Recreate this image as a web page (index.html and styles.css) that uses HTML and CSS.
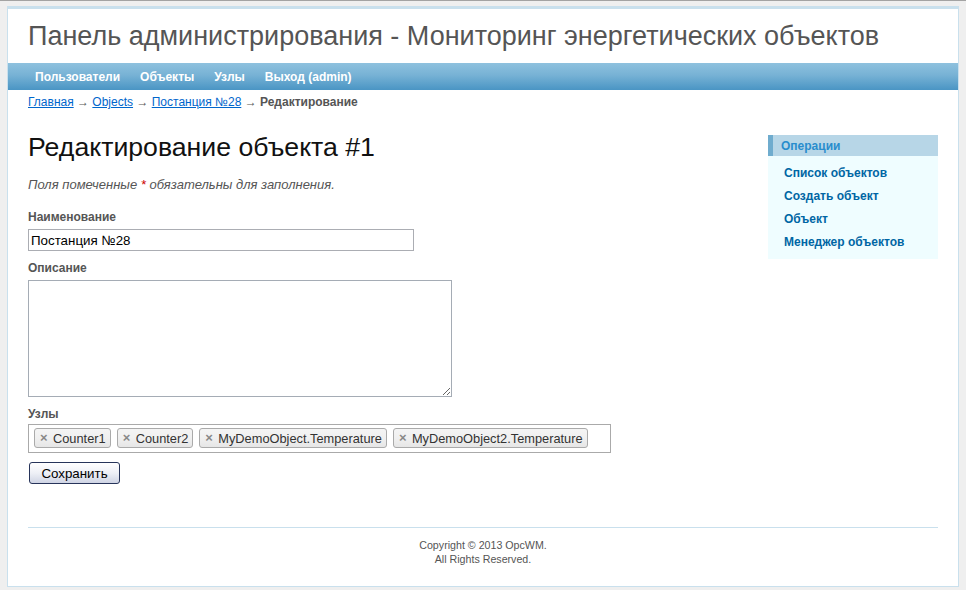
FILE: index.html
```html
<!DOCTYPE html>
<html lang="ru">
<head>
    <meta charset="UTF-8">
    <title>Панель администрирования - Редактирование объекта</title>
    <link rel="stylesheet" href="styles.css">
</head>
<body>
    <div class="page">
        <div class="header">
            <div class="logo">Панель администрирования - Мониторинг энергетических объектов</div>
        </div>
        <div class="mainmenu">
            <ul>
                <li><a href="#">Пользователи</a></li>
                <li><a href="#">Объекты</a></li>
                <li><a href="#">Узлы</a></li>
                <li><a href="#">Выход (admin)</a></li>
            </ul>
        </div>
        <div class="breadcrumbs">
            <a href="#">Главная</a> &rarr; <a href="#">Objects</a> &rarr; <a href="#">Постанция №28</a> &rarr; <span class="current">Редактирование</span>
        </div>

        <div class="columns">
            <div class="content">
                <h1>Редактирование объекта #1</h1>
                <form class="form">
                    <p class="note">Поля помеченные <span class="required">*</span> обязательны для заполнения.</p>

                    <div class="row">
                        <label for="name">Наименование</label>
                        <input type="text" id="name" class="text-input" value="Постанция №28">
                    </div>

                    <div class="row">
                        <label for="description">Описание</label>
                        <textarea id="description" class="text-area"></textarea>
                    </div>

                    <div class="row row-tags">
                        <label>Узлы</label>
                        <ul class="tag-box">
                            <li class="tag"><span class="tag-close">&times;</span>Counter1</li>
                            <li class="tag"><span class="tag-close">&times;</span>Counter2</li>
                            <li class="tag"><span class="tag-close">&times;</span>MyDemoObject.Temperature</li>
                            <li class="tag"><span class="tag-close">&times;</span>MyDemoObject2.Temperature</li>
                        </ul>
                    </div>

                    <div class="buttons">
                        <button type="button" class="save-btn">Сохранить</button>
                    </div>
                </form>
            </div>

            <div class="sidebar">
                <div class="portlet">
                    <div class="portlet-decoration">
                        <div class="portlet-title">Операции</div>
                    </div>
                    <div class="portlet-content">
                        <ul class="operations">
                            <li><a href="#">Список объектов</a></li>
                            <li><a href="#">Создать объект</a></li>
                            <li><a href="#">Объект</a></li>
                            <li><a href="#">Менеджер объектов</a></li>
                        </ul>
                    </div>
                </div>
            </div>
        </div>

        <div class="footer">
            Copyright &copy; 2013 OpcWM.<br>
            All Rights Reserved.
        </div>
    </div>
</body>
</html>
```

FILE: styles.css
```css
body {
    margin: 0;
    padding: 0;
    color: #555;
    font: normal 13.33px 'Liberation Sans', Arial, Helvetica, sans-serif;
    background: #efefef;
    border-top: 1px solid #a3a3a3;
}
.page {
    width: 950px;
    margin: 5px auto 0 auto;
    background: #fff;
    border: 1px solid #c9e0ed;
    border-top-width: 3px;
}
.logo {
    padding: 12px 20px 11px 20px;
    font-size: 27px;
    line-height: 31px;
    color: #555;
}
.mainmenu {
    background: linear-gradient(to bottom, #8ec1de 0%, #77b2d5 45%, #4a95c4 100%);
}
.mainmenu ul {
    display: flex;
    gap: 4px;
    list-style: none;
    margin: 0;
    padding: 6px 20px 5px 19px;
}
.mainmenu a {
    display: block;
    color: #fff;
    font-size: 12px;
    font-weight: bold;
    line-height: 16px;
    text-decoration: none;
    padding: 0 8px;
}
.breadcrumbs {
    font-size: 12px;
    line-height: 15px;
    padding: 5px 20px;
}
.breadcrumbs a {
    color: #06c;
}
.breadcrumbs .current {
    font-weight: bold;
}
.columns {
    display: flex;
}
.content {
    width: 740px;
    padding: 17px 0 20px 20px;
}
.sidebar {
    width: 170px;
    padding: 20px 20px 0 0;
}
h1 {
    margin: 0 0 14px 0;
    font-size: 26.67px;
    line-height: 31px;
    font-weight: normal;
    color: #111;
}
.form {
    margin: 0;
}
.note {
    margin: 0 0 18px 0;
    font-size: 13px;
    line-height: 15px;
    font-style: italic;
}
.required {
    color: #c00;
}
.row {
    margin-bottom: 10px;
}
.row label {
    display: block;
    font-size: 12px;
    font-weight: bold;
    line-height: 14px;
    margin-bottom: 5px;
}
.row-tags label {
    margin-bottom: 3px;
}
.text-input {
    display: block;
    box-sizing: border-box;
    width: 386px;
    height: 22px;
    margin: 0;
    padding: 1px 2px;
    border: 1px solid #abadb3;
    font: 13.33px 'Liberation Sans', Arial, sans-serif;
    color: #000;
}
.text-area {
    display: block;
    box-sizing: border-box;
    width: 424px;
    height: 117px;
    margin: 0;
    padding: 2px;
    border: 1px solid #a5acb5;
    font: 13.33px 'Liberation Sans', Arial, sans-serif;
}
.row-tags {
    margin-bottom: 9px;
}
.tag-box {
    display: flex;
    gap: 6px;
    box-sizing: border-box;
    width: 583px;
    height: 29px;
    margin: 0;
    padding: 3px 5px;
    list-style: none;
    border: 1px solid #aaa;
}
.tag {
    display: flex;
    align-items: center;
    height: 20px;
    box-sizing: border-box;
    padding: 0 4px 0 5px;
    border: 1px solid #aaa;
    border-radius: 3px;
    background: linear-gradient(to bottom, #f4f4f4 0%, #f0f0f0 50%, #e6e6e6 100%);
    color: #333;
    font-size: 12.8px;
}
.tag-close {
    width: 12px;
    margin-right: 1px;
    color: #888;
    font-size: 13px;
    font-weight: bold;
    line-height: 12px;
}
.buttons {
    margin-bottom: 23px;
}
.save-btn {
    width: 91px;
    height: 22px;
    margin: 0 0 0 1px;
    padding: 0;
    border: 1px solid #27345a;
    border-radius: 3px;
    background: linear-gradient(to bottom, #ffffff 0%, #eef0f6 50%, #cfd4e4 100%);
    color: #000;
    font: 13.33px 'Liberation Sans', Arial, sans-serif;
}
.portlet-decoration {
    padding: 4px 8px 3px 8px;
    background: #b7d6e7;
    border-left: 5px solid #6facce;
}
.portlet-title {
    font-size: 12px;
    font-weight: bold;
    line-height: 14px;
    color: #298dcd;
}
.portlet-content {
    padding: 6px 8px 5px 8px;
    background: #effdff;
}
.operations {
    list-style: none;
    margin: 0;
    padding: 0;
}
.operations li {
    padding: 2px 0 3px 0;
}
.operations a {
    display: block;
    padding: 2px 0 2px 8px;
    line-height: 14px;
    font: bold 12px 'Liberation Sans', Arial, sans-serif;
    color: #0066a4;
    text-decoration: none;
}
.footer {
    margin: 0 20px 10px 20px;
    padding: 10px;
    border-top: 1px solid #c9e0ed;
    font-size: 10.67px;
    line-height: 14px;
    text-align: center;
}
```
